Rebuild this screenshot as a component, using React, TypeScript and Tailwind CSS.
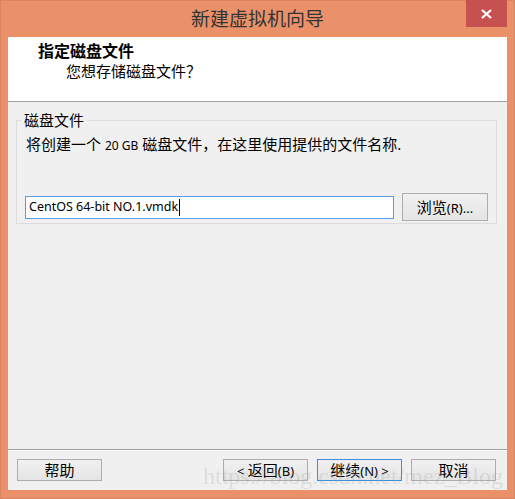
export default function App() {
  return (
    <div className="relative flex h-[499px] w-[515px] flex-col border border-[#d98560] bg-[#ea916a] font-['Noto_Sans','Noto_Sans_CJK_SC',sans-serif] text-black">
      {/* title bar */}
      <div className="relative flex h-[36px] shrink-0 items-start justify-center">
        <span className="mt-[5px] text-[19px] leading-[26px] text-[#333]">新建虚拟机向导</span>
        <div className="absolute right-[7px] top-[-1px] flex h-[27px] w-[41px] items-center justify-center bg-[#c75050]">
          <svg width="11" height="10" viewBox="0 0 11 10">
            <path d="M1 1 L10 9 M10 1 L1 9" stroke="#fff" strokeWidth="2.2" />
          </svg>
        </div>
      </div>

      <div className="mx-[7px] mb-[8px] flex flex-1 flex-col bg-[#f0f0f0]">
        {/* header */}
        <div className="h-[65px] shrink-0 border-b border-[#a0a0a0] bg-white pl-[30px] pt-[4px]">
          <div className="text-[16px] font-bold leading-[20px]">指定磁盘文件</div>
          <div className="pl-[28px] text-[15px] leading-[21px]">您想存储磁盘文件？</div>
        </div>

        {/* group */}
        <fieldset className="ml-[8px] mr-[10px] mt-[8px] h-[114px] border border-[#dcdcdc]">
          <legend className="ml-[4px] px-[3px] text-[15px] leading-[20px]">磁盘文件</legend>
          <div className="mt-[4px] pl-[9px] text-[15px] leading-[20px]">
            将创建一个 <span className="text-[12px]">20 GB</span> 磁盘文件，在这里使用提供的文件名称.
          </div>
          <div className="mt-[37px] flex items-center pl-[8px]">
            <div className="flex h-[23px] w-[369px] items-center border border-[#569de5] bg-white pl-[3px] text-[12.5px]">
              CentOS 64-bit NO.1.vmdk
              <span className="ml-[1px] h-[17px] w-[1px] bg-black" />
            </div>
            <button className="ml-[8px] h-[28px] w-[86px] border border-[#adadad] bg-gradient-to-b from-[#f0f0f0] to-[#e5e5e5] text-[15px] leading-[20px]">
              浏览<span className="text-[13px]">(R)...</span>
            </button>
          </div>
        </fieldset>

        {/* footer */}
        <div className="mt-auto flex h-[41px] shrink-0 items-start border-t border-[#a0a0a0] pl-[9px] pr-[11px] pt-[9px] shadow-[inset_0_1px_0_#fff]">
          <button className="h-[22px] w-[85px] border border-[#adadad] bg-gradient-to-b from-[#f0f0f0] to-[#e5e5e5] text-[15px] leading-[20px]">
            帮助
          </button>
          <div className="flex-1" />
          <button className="h-[22px] w-[85px] border border-[#adadad] bg-gradient-to-b from-[#f0f0f0] to-[#e5e5e5] text-[15px] leading-[20px]">
            <span className="text-[13px]">&lt; </span>返回<span className="text-[13px]">(B)</span>
          </button>
          <button className="ml-[9px] h-[22px] w-[85px] border border-[#3c8ce0] bg-gradient-to-b from-[#f0f0f0] to-[#e5e5e5] text-[15px] leading-[20px]">
            继续<span className="text-[13px]">(N) &gt;</span>
          </button>
          <button className="ml-[9px] h-[22px] w-[85px] border border-[#adadad] bg-gradient-to-b from-[#f0f0f0] to-[#e5e5e5] text-[15px] leading-[20px]">
            取消
          </button>
        </div>
      </div>

      {/* csdn watermark */}
      <div className="pointer-events-none absolute left-[202px] top-[463px] font-['Liberation_Serif',serif] text-[24px] leading-[24px] text-[#a0a0a0]/25">
        https://blog.csdn.net/mez_Blog
      </div>
    </div>
  )
}
